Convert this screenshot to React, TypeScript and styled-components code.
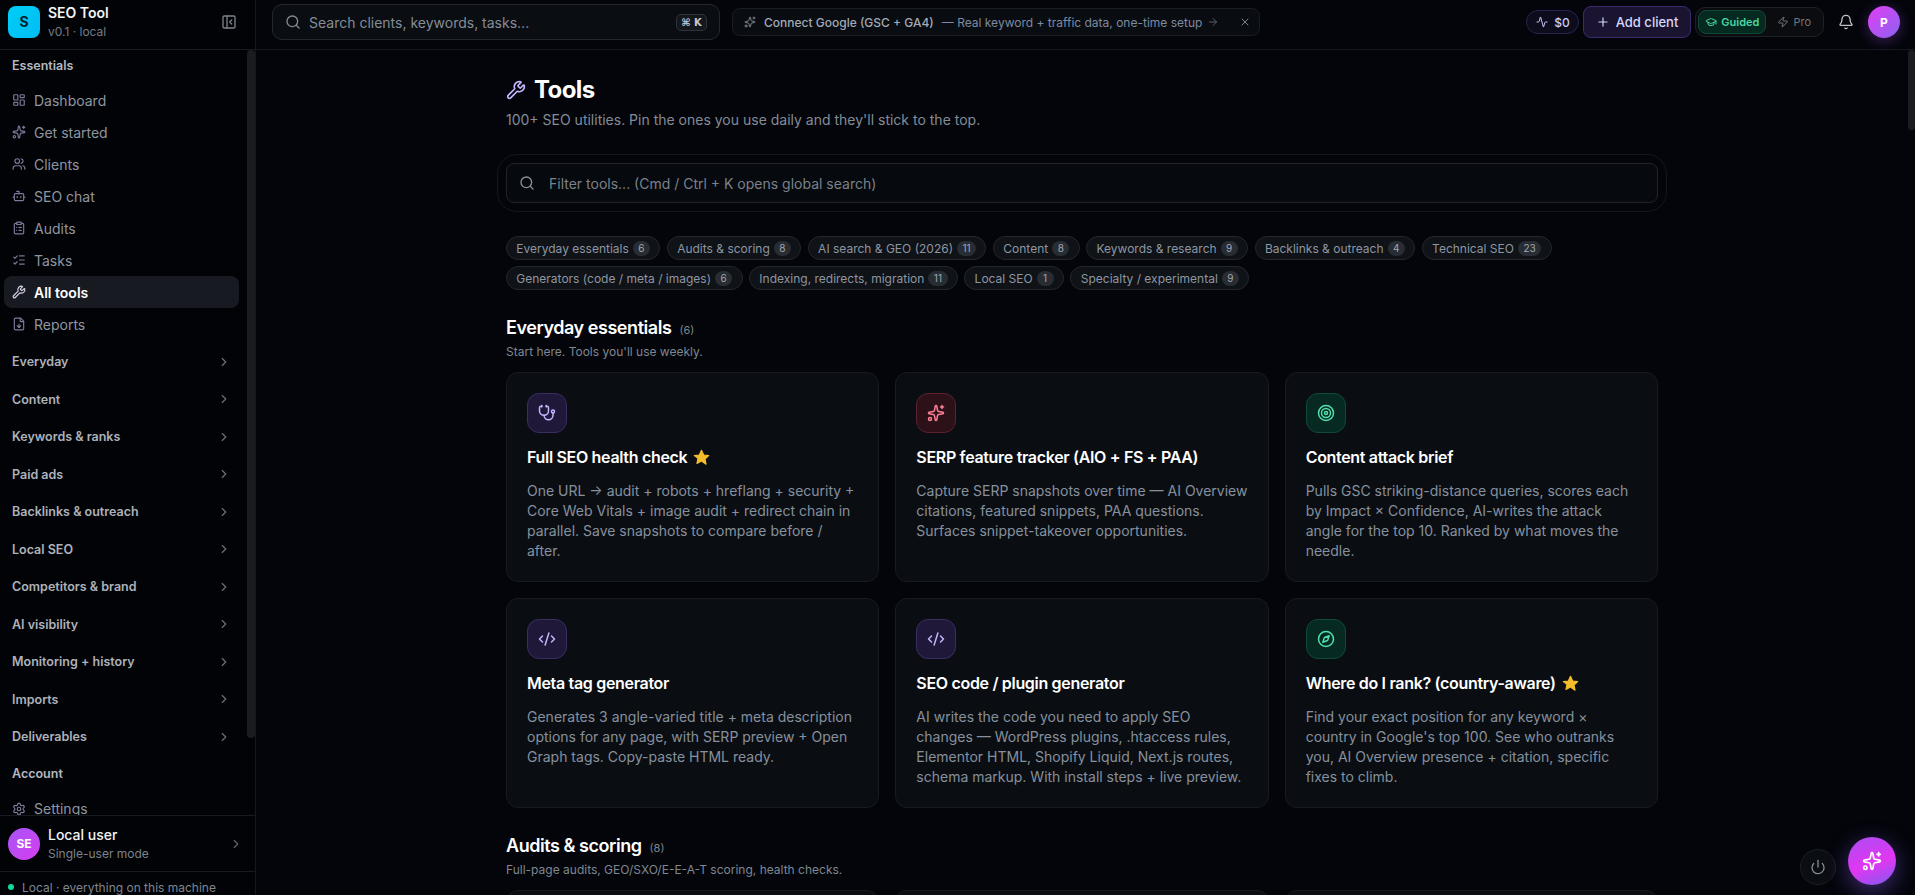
import {
  Activity,
  ArrowRight,
  Bell,
  Bot,
  ChevronRight,
  ClipboardList,
  CodeXml,
  Compass,
  FileDown,
  GraduationCap,
  LayoutDashboard,
  ListChecks,
  PanelLeftClose,
  Plus,
  Power,
  Search,
  Settings,
  Sparkles,
  Stethoscope,
  Target,
  Users,
  Wrench,
  X,
  Zap,
} from "lucide-react";
import type { ReactNode } from "react";
import styled, { createGlobalStyle } from "styled-components";

const GlobalStyle = createGlobalStyle`
  * {
    box-sizing: border-box;
  }
  html, body, #root {
    margin: 0;
    height: 100%;
  }
  body {
    background: #03050a;
    color: #fff;
    font-family: Inter, "Noto Sans", sans-serif;
    overflow: hidden;
  }
`;

const Shell = styled.div`
  display: flex;
  height: 100vh;
  overflow: hidden;
`;

const Sidebar = styled.aside`
  position: relative;
  display: flex;
  flex-direction: column;
  flex: 0 0 256px;
  height: 100%;
  background: #020307;
  border-right: 1px solid #14171c;
`;

const Brand = styled.div`
  display: flex;
  align-items: center;
  flex: 0 0 50px;
  gap: 8px;
  padding: 0 18px 6px 8px;
  border-bottom: 1px solid #171a1f;
`;

const LogoMark = styled.div`
  display: flex;
  align-items: center;
  justify-content: center;
  width: 32px;
  height: 32px;
  border-radius: 8px;
  background: linear-gradient(135deg, #00cdf7, #00bdf3);
  color: #06222c;
  font-size: 14px;
  font-weight: 700;
`;

const BrandText = styled.div`
  flex: 1;
  display: flex;
  flex-direction: column;
  gap: 2px;
`;

const BrandName = styled.div`
  font-size: 14px;
  font-weight: 600;
  line-height: 18px;
  color: #f4f5f7;
`;

const BrandVersion = styled.div`
  font-size: 12px;
  line-height: 16px;
  color: #747c87;
`;

const GhostIcon = styled.span<{ $color?: string; $gap?: number }>`
  display: inline-flex;
  align-items: center;
  justify-content: center;
  flex: none;
  margin-left: ${(p) => p.$gap || 0}px;
  color: ${(p) => p.$color || "#7d838c"};
`;

const NavScroll = styled.nav`
  flex: 1;
  min-height: 0;
  overflow: hidden;
  padding-left: 4px;
`;

const ScrollThumb = styled.div<{ $top: number; $height: number; $width: number }>`
  position: absolute;
  top: ${(p) => p.$top}px;
  right: 0;
  width: ${(p) => p.$width}px;
  height: ${(p) => p.$height}px;
  border-radius: 4px;
  background: #191c21;
`;

const NavLabel = styled.div<{ $after?: number }>`
  display: flex;
  align-items: center;
  height: 30px;
  margin-bottom: ${(p) => p.$after || 0}px;
  padding: 0 8px;
  font-size: 12.5px;
  font-weight: 600;
  color: #b4b9c0;
`;

const NavList = styled.div`
  display: flex;
  flex-direction: column;
`;

const NavItem = styled.a<{ $active?: boolean }>`
  display: flex;
  align-items: center;
  gap: 8px;
  width: 235px;
  height: 32px;
  padding: 0 8px;
  border-radius: 8px;
  font-size: 14px;
  font-weight: ${(p) => (p.$active ? 600 : 400)};
  color: ${(p) => (p.$active ? "#ffffff" : "#8f96a0")};
  background: ${(p) => (p.$active ? "#171a20" : "transparent")};

  svg {
    flex: none;
    color: ${(p) => (p.$active ? "#d5d3e6" : "#7e789a")};
  }
`;

const NavGroups = styled.div`
  display: flex;
  flex-direction: column;
  margin: 3px 0 3px;
`;

const NavGroup = styled.div`
  display: flex;
  align-items: center;
  justify-content: space-between;
  width: 235px;
  height: 37.5px;
  padding: 0 8px;
  font-size: 12.5px;
  font-weight: 600;
  color: #adb2ba;

  svg {
    color: #6a7079;
  }
`;

const UserRow = styled.div`
  display: flex;
  align-items: center;
  flex: 0 0 57px;
  gap: 8px;
  padding: 0 12px 0 8px;
  border-top: 1px solid #171a1f;
  border-bottom: 1px solid #171a1f;
`;

const UserAvatar = styled.div`
  display: flex;
  align-items: center;
  justify-content: center;
  width: 32px;
  height: 32px;
  border-radius: 50%;
  background: linear-gradient(135deg, #a855f7, #d63df0);
  font-size: 12px;
  font-weight: 700;
  color: #fff;
`;

const UserText = styled.div`
  flex: 1;
  display: flex;
  flex-direction: column;
  gap: 2px;
`;

const UserName = styled.div`
  font-size: 14px;
  font-weight: 500;
  line-height: 18px;
  color: #f2f3f5;
`;

const UserMode = styled.div`
  font-size: 12px;
  line-height: 16px;
  color: #7c838d;
`;

const StatusRow = styled.div`
  display: flex;
  align-items: flex-start;
  flex: 0 0 23px;
  min-height: 0;
  gap: 8px;
  padding: 8px 8px 0 8px;
  font-size: 12px;
  line-height: 15px;
  color: #7f8690;
`;

const StatusDot = styled.span`
  flex: none;
  width: 6px;
  height: 6px;
  margin-top: 4px;
  border-radius: 50%;
  background: #10d99a;
`;

const Main = styled.div`
  position: relative;
  flex: 1;
  min-width: 0;
  display: flex;
  flex-direction: column;
`;

const TopBar = styled.header`
  display: flex;
  align-items: center;
  flex: 0 0 50px;
  padding: 0 15px 5px 16px;
  border-bottom: 1px solid #15181d;
`;

const SearchButton = styled.button`
  display: flex;
  align-items: center;
  width: 448px;
  height: 36px;
  gap: 8px;
  padding: 0 12px 0 12px;
  background: #0a0d11;
  border: 1px solid #24282e;
  border-radius: 10px;
  color: #858c97;
  font: 400 14px Inter, sans-serif;
`;

const SearchText = styled.span`
  flex: 1;
  text-align: left;
`;

const Kbd = styled.kbd`
  display: inline-flex;
  align-items: center;
  justify-content: center;
  gap: 3px;
  width: 31px;
  height: 17px;
  border: 1px solid #2e333a;
  border-radius: 5px;
  background: #14171c;
  color: #c5c9cf;
  font: 600 10px "DejaVu Sans", Inter, sans-serif;
`;

const Banner = styled.div`
  display: flex;
  align-items: center;
  width: 528px;
  height: 28px;
  margin-left: 12px;
  padding: 0 8px 0 11px;
  background: #090c10;
  border: 1px solid #1a1e23;
  border-radius: 8px;
  font-size: 12px;
  white-space: nowrap;
`;

const BannerTitle = styled.span`
  margin-left: 8px;
  font-weight: 500;
  color: #a3aab5;
`;

const BannerNote = styled.span`
  flex: 1;
  margin-left: 8px;
  color: #7d8aa3;
`;

const TopActions = styled.div`
  display: flex;
  align-items: center;
  margin-left: auto;
`;

const SpendPill = styled.div`
  display: flex;
  align-items: center;
  gap: 6px;
  height: 24px;
  padding: 0 8px 0 9px;
  border: 1px solid #2a2150;
  border-radius: 12px;
  background: #0d0c1c;
  font-size: 12px;
  font-weight: 500;
  color: #c9cbf5;
`;

const AddClient = styled.button`
  display: flex;
  align-items: center;
  gap: 6px;
  height: 32px;
  margin-left: 4px;
  padding: 0 12px;
  border: 1px solid #3b2a70;
  border-radius: 8px;
  background: #1a1430;
  color: #d6d8fb;
  font: 500 13px Inter, sans-serif;
`;

const ModeToggle = styled.div`
  display: flex;
  align-items: center;
  height: 30px;
  margin-left: 4px;
  padding: 2px;
  border: 1px solid #1e2126;
  border-radius: 10px;
  background: #0a0c10;
`;

const ModeOption = styled.div<{ $on?: boolean }>`
  display: flex;
  align-items: center;
  gap: 4px;
  height: 24px;
  padding: ${(p) => (p.$on ? "0 6px" : "0 9px 0 10px")};
  border: 1px solid ${(p) => (p.$on ? "#0e4a37" : "transparent")};
  border-radius: 8px;
  background: ${(p) => (p.$on ? "#062a20" : "transparent")};
  font-size: 11px;
  font-weight: ${(p) => (p.$on ? 600 : 400)};
  color: ${(p) => (p.$on ? "#4bd6a0" : "#6f757e")};
`;

const BellButton = styled.div`
  display: flex;
  align-items: center;
  justify-content: center;
  width: 44px;
  color: #bfc3c9;
`;

const ProfileAvatar = styled.div`
  display: flex;
  align-items: center;
  justify-content: center;
  width: 32px;
  height: 32px;
  border-radius: 50%;
  background: linear-gradient(135deg, #e23ff5, #8a63f0);
  box-shadow: 0 3px 14px rgba(168, 85, 247, 0.35);
  font-size: 12px;
  font-weight: 700;
  color: #fff;
`;

const Scroller = styled.main`
  flex: 1;
  min-height: 0;
  overflow: hidden;
  padding-right: 7px;
`;

const Page = styled.div`
  width: 1152px;
  margin: 0 auto;
  padding-top: 24px;
`;

const PageTitle = styled.h1`
  display: flex;
  align-items: center;
  gap: 8px;
  margin: 0;
  font-size: 24px;
  line-height: 32px;
  font-weight: 700;
  letter-spacing: -0.025em;
  color: #fff;

  svg {
    color: #c4b5fd;
  }
`;

const PageSub = styled.p`
  margin: 4px 0 0;
  font-size: 14px;
  line-height: 20px;
  color: #848c97;
`;

const FilterRing = styled.div`
  margin: 24px -9px 0;
  padding: 8px;
  border: 1px solid #14171c;
  border-radius: 20px;
`;

const FilterBox = styled.label`
  display: flex;
  align-items: center;
  height: 40px;
  gap: 12px;
  padding: 0 12px;
  background: #06090d;
  border: 1px solid #20242a;
  border-radius: 8px;
  color: #8b929c;
`;

const FilterInput = styled.input`
  flex: 1;
  border: 0;
  outline: 0;
  background: transparent;
  color: #fff;
  font: 400 14px Inter, sans-serif;

  &::placeholder {
    color: #7a818b;
    opacity: 1;
  }
`;

const Chips = styled.div`
  display: flex;
  flex-wrap: wrap;
  gap: 6px 6.5px;
  margin-top: 24px;
`;

const Chip = styled.button`
  display: flex;
  align-items: center;
  gap: 4px;
  height: 24px;
  padding: 0 9.3px;
  border: 1px solid #23272d;
  border-radius: 12px;
  background: #0f1216;
  color: #8e96a3;
  font: 400 12px Inter, sans-serif;
  white-space: nowrap;
`;

const ChipCount = styled.span`
  min-width: 17px;
  padding: 0 5.5px;
  border-radius: 8px;
  background: #282c33;
  color: #a2a8b2;
  font-size: 10px;
  line-height: 15px;
  text-align: center;
`;

const Section = styled.section`
  margin-top: 24px;
`;

const SectionHead = styled.div`
  display: flex;
  align-items: baseline;
  gap: 8px;
`;

const SectionTitle = styled.h2`
  margin: 0;
  font-size: 18px;
  line-height: 28px;
  font-weight: 600;
  letter-spacing: -0.025em;
  color: #fff;
`;

const SectionCount = styled.span`
  font-size: 11px;
  color: #7d8590;
`;

const SectionNote = styled.p`
  margin: 2px 0 12px;
  font-size: 12px;
  line-height: 16px;
  color: #7f8792;
`;

const CardGrid = styled.div`
  display: grid;
  grid-template-columns: repeat(3, 1fr);
  gap: 16px;
`;

const Card = styled.article<{ $empty?: boolean }>`
  min-height: ${(p) => (p.$empty ? "200px" : "0")};
  padding: 20px;
  background: #0a0e12;
  border: 1px solid #171b20;
  border-radius: 12px;
`;

const tones = {
  violet: { bg: "#1f1838", border: "#3a2d63", fg: "#c4b5fd" },
  rose: { bg: "#2d1119", border: "#5c2230", fg: "#fb7f93" },
  green: { bg: "#062a22", border: "#0e4a3a", fg: "#4fe0ae" },
};

const CardIcon = styled.div<{ $tone: keyof typeof tones }>`
  display: flex;
  align-items: center;
  justify-content: center;
  width: 40px;
  height: 40px;
  border-radius: 12px;
  background: ${(p) => tones[p.$tone].bg};
  border: 1px solid ${(p) => tones[p.$tone].border};
  color: ${(p) => tones[p.$tone].fg};
`;

const CardTitle = styled.h3`
  display: flex;
  align-items: center;
  gap: 6px;
  margin: 12px 0 0;
  font-size: 16px;
  line-height: 24px;
  font-weight: 600;
  letter-spacing: -0.02em;
  color: #fff;
`;

const CardDesc = styled.p`
  margin: 12px 0 0;
  font-size: 14px;
  line-height: 20px;
  color: #87909e;
`;

const FloatDock = styled.div`
  position: fixed;
  right: 19px;
  bottom: 10px;
  display: flex;
  align-items: flex-end;
  gap: 12px;
`;

const PowerButton = styled.button`
  display: flex;
  align-items: center;
  justify-content: center;
  width: 36px;
  height: 36px;
  border: 1px solid #1c2025;
  border-radius: 50%;
  background: #0a0d11;
  color: #858b94;
`;

const AssistantButton = styled.button`
  display: flex;
  align-items: center;
  justify-content: center;
  width: 48px;
  height: 48px;
  border: 0;
  border-radius: 50%;
  background: linear-gradient(160deg, #a94df2 0%, #e136f2 55%, #7e5cf0 100%);
  box-shadow: 0 6px 22px rgba(139, 92, 246, 0.45);
  color: #fff;
`;

function Star() {
  return (
    <svg width="17" height="17" viewBox="0 0 24 24" aria-label="star">
      <path
        d="M12 1.8l3.1 6.6 7.1.9-5.2 4.9 1.4 7.2L12 17l-6.4 3.4L7 13.2 1.8 9.3l7.1-.9z"
        fill="#f4bd2a"
        stroke="#f4bd2a"
        strokeWidth="1.6"
        strokeLinejoin="round"
      />
    </svg>
  );
}

const essentials: { label: string; icon: ReactNode; active?: boolean }[] = [
  { label: "Dashboard", icon: <LayoutDashboard size={14} /> },
  { label: "Get started", icon: <Sparkles size={14} /> },
  { label: "Clients", icon: <Users size={14} /> },
  { label: "SEO chat", icon: <Bot size={14} /> },
  { label: "Audits", icon: <ClipboardList size={14} /> },
  { label: "Tasks", icon: <ListChecks size={14} /> },
  { label: "All tools", icon: <Wrench size={14} />, active: true },
  { label: "Reports", icon: <FileDown size={14} /> },
];

const groups = [
  "Everyday",
  "Content",
  "Keywords & ranks",
  "Paid ads",
  "Backlinks & outreach",
  "Local SEO",
  "Competitors & brand",
  "AI visibility",
  "Monitoring + history",
  "Imports",
  "Deliverables",
];

const chips: [string, number][] = [
  ["Everyday essentials", 6],
  ["Audits & scoring", 8],
  ["AI search & GEO (2026)", 11],
  ["Content", 8],
  ["Keywords & research", 9],
  ["Backlinks & outreach", 4],
  ["Technical SEO", 23],
  ["Generators (code / meta / images)", 6],
  ["Indexing, redirects, migration", 11],
  ["Local SEO", 1],
  ["Specialty / experimental", 9],
];

const tools: {
  title: string;
  desc: string;
  tone: keyof typeof tones;
  icon: ReactNode;
  starred?: boolean;
}[] = [
  {
    title: "Full SEO health check",
    desc: "One URL → audit + robots + hreflang + security + Core Web Vitals + image audit + redirect chain in parallel. Save snapshots to compare before / after.",
    tone: "violet",
    icon: <Stethoscope size={18} />,
    starred: true,
  },
  {
    title: "SERP feature tracker (AIO + FS + PAA)",
    desc: "Capture SERP snapshots over time — AI Overview citations, featured snippets, PAA questions. Surfaces snippet-takeover opportunities.",
    tone: "rose",
    icon: <Sparkles size={18} />,
  },
  {
    title: "Content attack brief",
    desc: "Pulls GSC striking-distance queries, scores each by Impact × Confidence, AI-writes the attack angle for the top 10. Ranked by what moves the needle.",
    tone: "green",
    icon: <Target size={18} />,
  },
  {
    title: "Meta tag generator",
    desc: "Generates 3 angle-varied title + meta description options for any page, with SERP preview + Open Graph tags. Copy-paste HTML ready.",
    tone: "violet",
    icon: <CodeXml size={18} />,
  },
  {
    title: "SEO code / plugin generator",
    desc: "AI writes the code you need to apply SEO changes — WordPress plugins, .htaccess rules, Elementor HTML, Shopify Liquid, Next.js routes, schema markup. With install steps + live preview.",
    tone: "violet",
    icon: <CodeXml size={18} />,
  },
  {
    title: "Where do I rank? (country-aware)",
    desc: "Find your exact position for any keyword × country in Google's top 100. See who outranks you, AI Overview presence + citation, specific fixes to climb.",
    tone: "green",
    icon: <Compass size={18} />,
    starred: true,
  },
];

export default function App() {
  return (
    <Shell>
      <GlobalStyle />
      <Sidebar>
        <Brand>
          <LogoMark>S</LogoMark>
          <BrandText>
            <BrandName>SEO Tool</BrandName>
            <BrandVersion>v0.1 · local</BrandVersion>
          </BrandText>
          <GhostIcon>
            <PanelLeftClose size={16} />
          </GhostIcon>
        </Brand>
        <NavScroll>
          <NavLabel $after={4}>Essentials</NavLabel>
          <NavList>
            {essentials.map((item) => (
              <NavItem key={item.label} $active={item.active}>
                {item.icon}
                {item.label}
              </NavItem>
            ))}
          </NavList>
          <NavGroups>
            {groups.map((g) => (
              <NavGroup key={g}>
                {g}
                <ChevronRight size={14} />
              </NavGroup>
            ))}
          </NavGroups>
          <NavLabel $after={4}>Account</NavLabel>
          <NavItem>
            <Settings size={14} />
            Settings
          </NavItem>
        </NavScroll>
        <ScrollThumb $top={50} $height={688} $width={8} />
        <UserRow>
          <UserAvatar>SE</UserAvatar>
          <UserText>
            <UserName>Local user</UserName>
            <UserMode>Single-user mode</UserMode>
          </UserText>
          <GhostIcon $color="#5f656e">
            <ChevronRight size={14} />
          </GhostIcon>
        </UserRow>
        <StatusRow>
          <StatusDot />
          Local · everything on this machine
        </StatusRow>
      </Sidebar>
      <Main>
        <TopBar>
          <SearchButton>
            <Search size={16} />
            <SearchText>Search clients, keywords, tasks...</SearchText>
            <Kbd>⌘ K</Kbd>
          </SearchButton>
          <Banner>
            <GhostIcon $color="#7f8690">
              <Sparkles size={12} />
            </GhostIcon>
            <BannerTitle>Connect Google (GSC + GA4)</BannerTitle>
            <BannerNote>— Real keyword + traffic data, one-time setup</BannerNote>
            <GhostIcon $color="#5b6169">
              <ArrowRight size={12} />
            </GhostIcon>
            <GhostIcon $color="#7a818a" $gap={20}>
              <X size={12} />
            </GhostIcon>
          </Banner>
          <TopActions>
            <SpendPill>
              <Activity size={12} />
              $0
            </SpendPill>
            <AddClient>
              <Plus size={14} />
              Add client
            </AddClient>
            <ModeToggle>
              <ModeOption $on>
                <GraduationCap size={12} />
                Guided
              </ModeOption>
              <ModeOption>
                <Zap size={12} />
                Pro
              </ModeOption>
            </ModeToggle>
            <BellButton>
              <Bell size={16} />
            </BellButton>
            <ProfileAvatar>P</ProfileAvatar>
          </TopActions>
        </TopBar>
        <Scroller>
          <Page>
            <PageTitle>
              <Wrench size={20} />
              Tools
            </PageTitle>
            <PageSub>
              100+ SEO utilities. Pin the ones you use daily and they'll stick to
              the top.
            </PageSub>
            <FilterRing>
              <FilterBox>
                <Search size={16} />
                <FilterInput placeholder="Filter tools... (Cmd / Ctrl + K opens global search)" />
              </FilterBox>
            </FilterRing>
            <Chips>
              {chips.map(([label, count]) => (
                <Chip key={label}>
                  {label}
                  <ChipCount>{count}</ChipCount>
                </Chip>
              ))}
            </Chips>
            <Section>
              <SectionHead>
                <SectionTitle>Everyday essentials</SectionTitle>
                <SectionCount>(6)</SectionCount>
              </SectionHead>
              <SectionNote>Start here. Tools you'll use weekly.</SectionNote>
              <CardGrid>
                {tools.map((t) => (
                  <Card key={t.title}>
                    <CardIcon $tone={t.tone}>{t.icon}</CardIcon>
                    <CardTitle>
                      {t.title}
                      {t.starred && <Star />}
                    </CardTitle>
                    <CardDesc>{t.desc}</CardDesc>
                  </Card>
                ))}
              </CardGrid>
            </Section>
            <Section>
              <SectionHead>
                <SectionTitle>Audits & scoring</SectionTitle>
                <SectionCount>(8)</SectionCount>
              </SectionHead>
              <SectionNote>Full-page audits, GEO/SXO/E-E-A-T scoring, health checks.</SectionNote>
              <CardGrid>
                <Card $empty />
                <Card $empty />
                <Card $empty />
              </CardGrid>
            </Section>
          </Page>
        </Scroller>
        <ScrollThumb $top={50} $height={80} $width={7} />
      </Main>
      <FloatDock>
        <PowerButton>
          <Power size={16} />
        </PowerButton>
        <AssistantButton>
          <Sparkles size={20} />
        </AssistantButton>
      </FloatDock>
    </Shell>
  );
}
